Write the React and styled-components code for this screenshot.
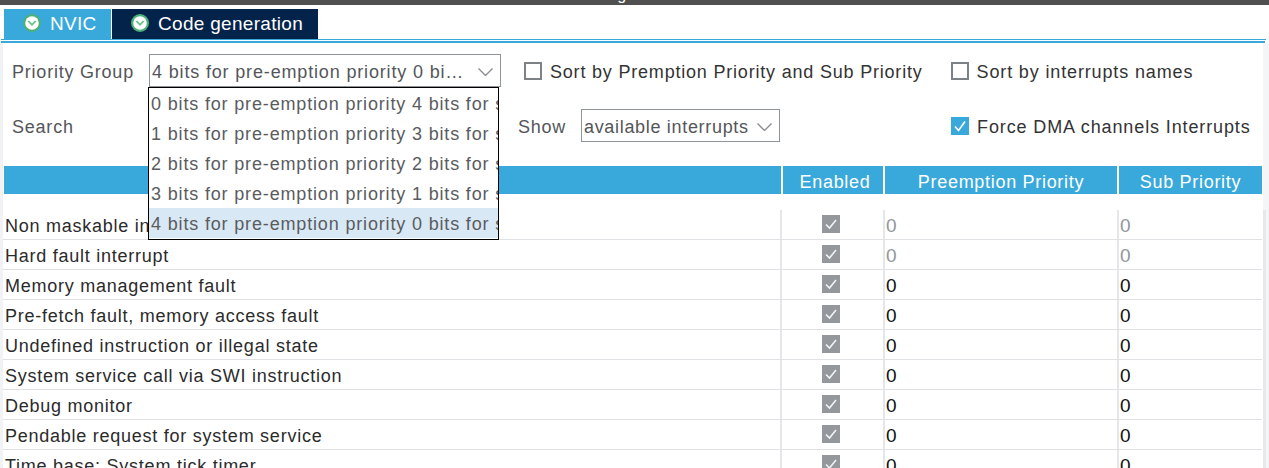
import React from "react";
import styled, { createGlobalStyle } from "styled-components";

const GlobalStyle = createGlobalStyle`
  html, body {
    margin: 0;
    padding: 0;
    height: 468px;
    overflow: hidden;
    background: #ffffff;
  }
  body {
    font-family: "Liberation Sans", Arial, sans-serif;
  }
`;

const Page = styled.div`
  width: 1269px;
  height: 468px;
  overflow: hidden;
  font-size: 18px;
  letter-spacing: 0.78px;
`;

const TitleBar = styled.div`
  height: 5px;
  background: #505050;
  overflow: hidden;
  display: flex;
  align-items: flex-end;
  padding-left: 580px;
`;

const Title = styled.span`
  color: #ffffff;
  font-size: 16px;
  line-height: 16px;
  letter-spacing: 0;
  flex: none;
  margin-bottom: 2px;
`;

const Tabs = styled.div`
  display: flex;
  gap: 1px;
  height: 30px;
  margin-top: 4px;
  padding-left: 4px;
`;

const Tab = styled.div`
  width: ${(p) => p.$width}px;
  padding-left: ${(p) => p.$pad}px;
  box-sizing: border-box;
  display: flex;
  align-items: center;
  gap: 9px;
  color: #ffffff;
  font-size: 19px;
  letter-spacing: 0.3px;
  background: ${(p) => (p.$active ? "#03234b" : "#39a9dc")};

  svg {
    margin-top: -2px;
  }
`;

const TabLine = styled.div`
  height: 1px;
  margin: 0 3px 0 1px;
  background: #39a9dc;
  border-bottom: 1px solid #ffffff;
`;

const TabLineThick = styled.div`
  height: 2px;
  margin: 0 4px 0 1px;
  background: #39a9dc;
`;

const Body = styled.div`
  display: flex;
`;

const Content = styled.div`
  flex: 1;
  height: 425px;
  background: #ffffff;
  border-left: 3px solid #f0f2f5;
  position: relative;
`;

const RightGutter = styled.div`
  width: 6px;
  background: linear-gradient(#f4f5f7 167px, #e6e8ec 167px) left / 3px 100% no-repeat, #f4f5f7;
`;

const Toolbar = styled.div`
  display: flex;
  align-items: center;
  height: 33px;
  padding-top: ${(p) => p.$top}px;
`;

const Label = styled.span`
  color: #54565a;
  width: ${(p) => p.$width}px;
  flex: none;
  padding-top: 3px;
  margin-left: ${(p) => p.$left || 0}px;
`;

const Select = styled.div`
  box-sizing: border-box;
  width: ${(p) => p.$width}px;
  height: 33px;
  flex: none;
  padding: 3px 7px 0 2px;
  border: 1px solid #8f9499;
  display: flex;
  align-items: center;
  justify-content: space-between;
  color: #54565a;
  white-space: nowrap;
  letter-spacing: ${(p) => p.$spacing}px;
`;

const CheckLabel = styled.label`
  display: flex;
  align-items: center;
  gap: 8px;
  color: #333333;
  white-space: nowrap;
  padding-top: 3px;
  margin-left: ${(p) => p.$left}px;
  letter-spacing: ${(p) => p.$spacing}px;
`;

const Box = styled.span`
  box-sizing: border-box;
  width: 18px;
  height: 18px;
  flex: none;
  margin-top: -3px;
  border: 2px solid #7d8287;
  background: #ffffff;
`;

const BlueBox = styled.svg`
  width: 18px;
  height: 18px;
  flex: none;
  display: block;
  margin-top: -3px;
`;

const PopupList = styled.div`
  position: absolute;
  left: 145px;
  top: 44px;
  width: 349px;
  height: 151px;
  border: 1px solid #000000;
  background: #ffffff;
  overflow: hidden;
  z-index: 2;
`;

const PopupItem = styled.div`
  height: 30px;
  line-height: 32px;
  padding-left: 2px;
  white-space: nowrap;
  color: #5a5c60;
  letter-spacing: 0.84px;
  background: ${(p) => (p.$selected ? "#d9e8f5" : "transparent")};
`;

const HeaderRow = styled.div`
  display: grid;
  grid-template-columns: 777px 100px 232px 143px;
  grid-auto-rows: 28px;
  gap: 2px;
  height: 28px;
  margin-top: 24px;
  margin-left: 1px;
  width: 1259px;
  letter-spacing: 0.7px;
`;

const HeaderCell = styled.div`
  background: #39a9dc;
  color: #ffffff;
  text-align: center;
  line-height: 32px;
  padding-left: ${(p) => p.$shift || 0}px;
`;

const Rows = styled.div`
  margin-top: 16px;
  width: 1259px;
  letter-spacing: 0.75px;
`;

const Row = styled.div`
  display: grid;
  grid-template-columns: 777px 103px 234px 145px;
  grid-auto-rows: 29px;
  height: 30px;
  box-sizing: border-box;
  border-bottom: 1px solid #dfe1e5;
  color: #2b2b2b;
`;

const NameCell = styled.div`
  padding-left: 2px;
  line-height: 33px;
  white-space: nowrap;
  overflow: hidden;
`;

const CheckCell = styled.div`
  display: flex;
  align-items: center;
  justify-content: center;
  border-left: 2px solid #e4e6ea;
  padding: 0 3px 1px 0;
`;

const ValueCell = styled.div`
  border-left: 2px solid #e4e6ea;
  padding-left: 1px;
  line-height: 32px;
  font-size: 19px;
  color: ${(p) => (p.$muted ? "#92969b" : "#111111")};
`;

function TabIcon() {
  return (
    <svg width="18" height="18" viewBox="0 0 18 18">
      <circle cx="9" cy="9" r="9" fill="#4cb077" />
      <circle cx="9" cy="9" r="6.8" fill="#ffffff" />
      <path d="M4.6 7.6 L9 12 L13.4 7.6 L12 6.6 L9 9.4 L6 6.6 Z" fill="#6cc08a" />
    </svg>
  );
}

function Chevron() {
  return (
    <svg width="15" height="8" viewBox="0 0 15 8">
      <path d="M0.5 0.5 L7.5 7.5 L14.5 0.5" fill="none" stroke="#8a8e93" strokeWidth="1.4" />
    </svg>
  );
}

function GreyCheck() {
  return (
    <svg width="18" height="18" viewBox="0 0 18 18">
      <rect width="18" height="18" fill="#94989d" />
      <path d="M4 9.5 L7.5 13 L14 5" fill="none" stroke="#f2f3f4" strokeWidth="1.6" />
    </svg>
  );
}

const priorities = [
  "0 bits for pre-emption priority 4 bits for subpriority",
  "1 bits for pre-emption priority 3 bits for subpriority",
  "2 bits for pre-emption priority 2 bits for subpriority",
  "3 bits for pre-emption priority 1 bits for subpriority",
  "4 bits for pre-emption priority 0 bits for subpriority",
];

const interrupts = [
  { name: "Non maskable interrupt", muted: true },
  { name: "Hard fault interrupt", muted: true },
  { name: "Memory management fault" },
  { name: "Pre-fetch fault, memory access fault" },
  { name: "Undefined instruction or illegal state" },
  { name: "System service call via SWI instruction" },
  { name: "Debug monitor" },
  { name: "Pendable request for system service" },
  { name: "Time base: System tick timer" },
];

export default function App() {
  return (
    <Page>
      <GlobalStyle />
      <TitleBar>
        <Title>Configuration</Title>
      </TitleBar>
      <Tabs>
        <Tab $width={107} $pad={19}>
          <TabIcon />
          NVIC
        </Tab>
        <Tab $width={206} $pad={19} $active>
          <TabIcon />
          Code generation
        </Tab>
      </Tabs>
      <TabLine />
      <TabLineThick />
      <Body>
        <Content>
          <Toolbar $top={11}>
            <Label $left={9} $width={137}>Priority Group</Label>
            <Select $width={352} $spacing={0.84}>
              4 bits for pre-emption priority 0 bi…
              <Chevron />
            </Select>
            <CheckLabel $left={23} $spacing={0.8}>
              <Box />
              Sort by Premption Priority and Sub Priority
            </CheckLabel>
            <CheckLabel $left={28} $spacing={0.86}>
              <Box />
              Sort by interrupts names
            </CheckLabel>
          </Toolbar>
          <Toolbar $top={22}>
            <Label $left={9} $width={506}>Search</Label>
            <Label $width={63}>Show</Label>
            <Select $width={199} $spacing={0.68}>
              available interrupts
              <Chevron />
            </Select>
            <CheckLabel $left={171} $spacing={0.88}>
              <BlueBox viewBox="0 0 18 18">
                <rect width="18" height="18" fill="#39a9dc" />
                <path d="M4 9.5 L7.5 13.5 L14 4.5" fill="none" stroke="#ffffff" strokeWidth="1.6" />
              </BlueBox>
              Force DMA channels Interrupts
            </CheckLabel>
          </Toolbar>
          <PopupList>
            {priorities.map((p, i) => (
              <PopupItem key={p} $selected={i === 4}>{p}</PopupItem>
            ))}
          </PopupList>
          <HeaderRow>
            <HeaderCell />
            <HeaderCell $shift={4}>Enabled</HeaderCell>
            <HeaderCell>Preemption Priority</HeaderCell>
            <HeaderCell>Sub Priority</HeaderCell>
          </HeaderRow>
          <Rows>
            {interrupts.map((it) => (
              <Row key={it.name}>
                <NameCell>{it.name}</NameCell>
                <CheckCell><GreyCheck /></CheckCell>
                <ValueCell $muted={it.muted}>0</ValueCell>
                <ValueCell $muted={it.muted}>0</ValueCell>
              </Row>
            ))}
          </Rows>
        </Content>
        <RightGutter />
      </Body>
    </Page>
  );
}
